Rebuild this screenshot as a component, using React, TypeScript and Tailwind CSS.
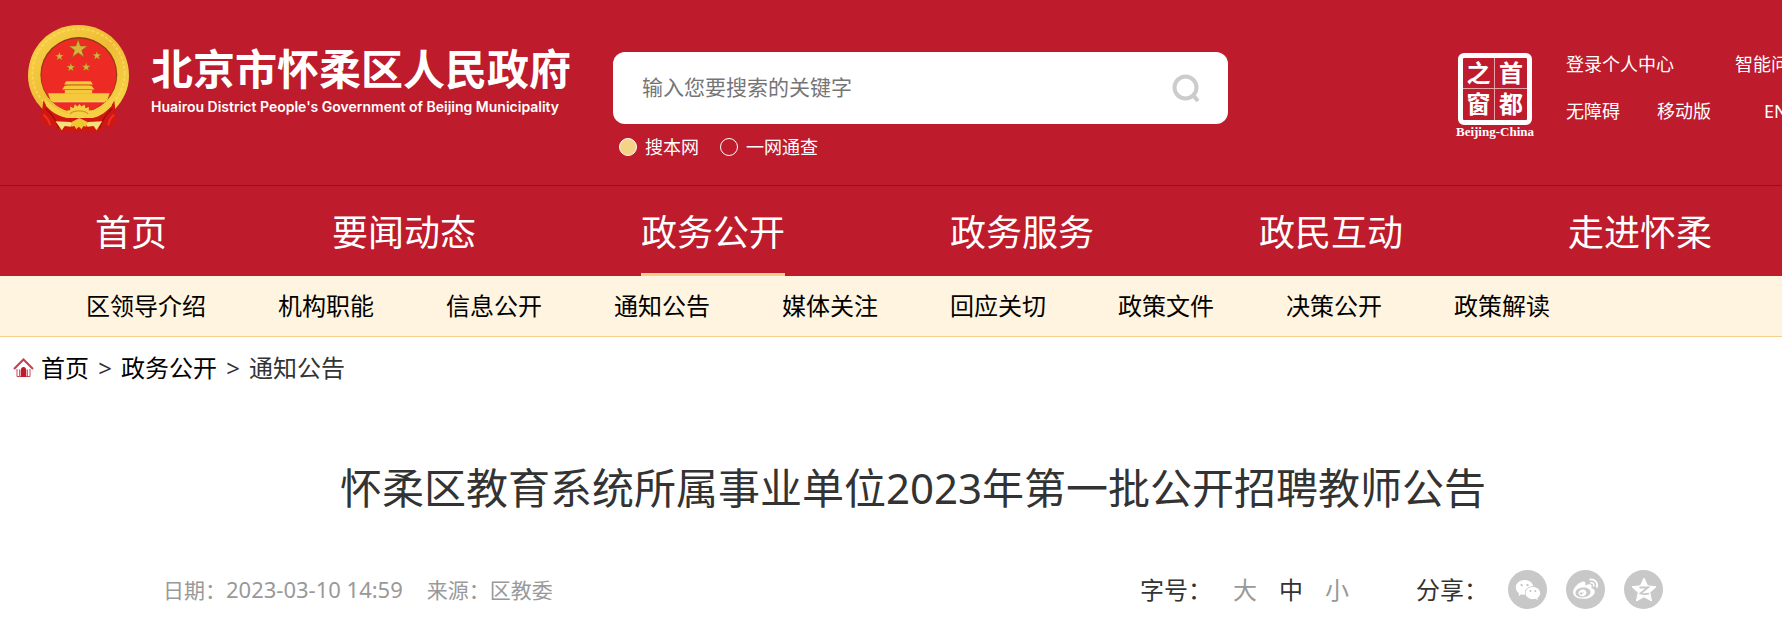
import React, { useState } from 'react';
import { AiFillWechat } from 'react-icons/ai';
import { FaWeibo } from 'react-icons/fa';

const mainNav = ['首页', '要闻动态', '政务公开', '政务服务', '政民互动', '走进怀柔'];

const subNav = [
  '区领导介绍',
  '机构职能',
  '信息公开',
  '通知公告',
  '媒体关注',
  '回应关切',
  '政策文件',
  '决策公开',
  '政策解读',
];

const fontSizes = ['大', '中', '小'];

const STAR = 'M0-10 2.3-3.1 9.5-3.1 3.7 1.2 5.9 8.1 0 3.9-5.9 8.1-3.7 1.2-9.5-3.1-2.3-3.1Z';

const Emblem: React.FC = () => (
  <svg viewBox="24 30 302 320" className="h-[107px] w-[101px] shrink-0" aria-hidden="true">
    <defs>
      <linearGradient id="gold" x1="0" y1="0" x2="1" y2="1">
        <stop offset="0" stopColor="#f9d548" />
        <stop offset="0.5" stopColor="#efbb35" />
        <stop offset="1" stopColor="#f8d84a" />
      </linearGradient>
    </defs>
    {/* wreath */}
    <path d="M175 30C262 30 326 98 326 182C326 222 308 256 284 282L240 312H112L68 282C42 256 24 222 24 182C24 98 88 30 175 30Z" fill="url(#gold)" />
    <ellipse cx="175" cy="174" rx="138" ry="132" fill="none" stroke="#fbe06a" strokeWidth="5" strokeDasharray="9 6" opacity="0.7" />
    {/* ribbons */}
    <path d="M70 256C84 280 108 300 146 308H206C246 300 270 280 282 256L289 316 274 334 252 332 238 349H122L104 334 82 332 62 318Z" fill="#d01712" />
    <path d="M76 280C94 294 106 310 116 338M276 280C260 294 248 310 238 338" fill="none" stroke="#a30c0c" strokeWidth="4" />
    <path d="M70 298C80 306 88 316 90 330M282 298C272 306 266 316 264 330" fill="none" stroke="#ee3024" strokeWidth="6" />
    <ellipse cx="176" cy="179" rx="115" ry="113" fill="#8f3a12" />
    <ellipse cx="176" cy="181" rx="112" ry="111" fill="#ee2a24" />
    <g fill="#d9b43a" stroke="#8c6a1c" strokeWidth="0.6">
      <path d={STAR} transform="translate(174 102) scale(2.9)" />
      <path d={STAR} transform="translate(118 124) scale(1.35)" />
      <path d={STAR} transform="translate(230 122) scale(1.35)" />
      <path d={STAR} transform="translate(152 157) scale(1.35)" />
      <path d={STAR} transform="translate(198 156) scale(1.35)" />
    </g>
    {/* gate tower */}
    <g fill="#f6c83c">
      <path d="M138 198H212L218 208H132Z" />
      <path d="M140 208H210V213H140Z" fill="#c98a1c" />
      <path d="M134 212H214L223 223H126Z" />
      <path d="M134 223H216V235H134Z" />
      <path d="M84 234H268L260 258H92Z" />
    </g>
    <path d="M97 258H255V261H97Z" fill="#fdf0b8" />
    <path d="M134 223H216" stroke="#b3761a" strokeWidth="2" />
    {/* cog and grain at the foot */}
    <path d="M72 246C96 274 128 293 146 296L142 284 150 286 150 274 160 279 164 267 172 274 178 266 184 274 193 268 196 279 206 275 206 286 214 284 210 296C230 292 256 274 280 246L274 272C250 298 226 310 206 308L190 302H164L146 308C124 306 100 296 78 272Z" fill="#f6cf45" />
    <path d="M150 296C160 284 192 284 204 296" fill="none" stroke="#d39b22" strokeWidth="4" />
    <path d="M106 318 150 320 158 324 152 334 134 332 125 345ZM246 318 204 320 196 324 202 334 220 332 229 345Z" fill="#f7e07a" />
    <path d="M154 320 166 314 178 308 190 314 202 320 198 334 190 332 184 342 176 334 168 342 163 332 154 334Z" fill="#efc531" />
  </svg>
);

const CapitalSeal: React.FC = () => (
  <a href="#capital" className="flex w-[82px] flex-col items-center text-white">
    <span className="grid h-[72px] w-[74px] grid-cols-2 grid-rows-2 rounded-md border-[5px] border-white text-2xl leading-[30px] font-bold">
      <span className="border-r border-b border-white/60 text-center">之</span>
      <span className="border-b border-white/60 text-center">首</span>
      <span className="border-r border-white/60 text-center">窗</span>
      <span className="text-center">都</span>
    </span>
    <span className="font-['Liberation_Serif',serif] text-[13px] leading-[14px] font-bold whitespace-nowrap">Beijing-China</span>
  </a>
);

const HomeIcon: React.FC = () => (
  <svg viewBox="0 0 21 20" className="h-5 w-[21px]" aria-hidden="true">
    <path d="M1 11 10.500 1.500 20 11" fill="none" stroke="#be1b2c" strokeWidth="2" opacity="0.85" />
    <path d="M4 11V18.500H17V11" fill="none" stroke="#be1b2c" strokeWidth="1" opacity="0.8" />
    <path d="M6 18V11.500H7.500V18ZM13.500 18V11.500H15V18Z" fill="#be1b2c" opacity="0.7" />
    <path d="M8 19V11.500Q8 9 10.500 9Q13 9 13 11.500V19Z" fill="#be1b2c" />
  </svg>
);

const QzoneIcon: React.FC = () => (
  <svg viewBox="0 0 28 28" className="size-7" aria-hidden="true">
    <path d="M14 2 17.600 9.800 26 10.700 19.800 16.500 21.600 25 14 20.800 6.400 25 8.200 16.500 2 10.700 10.400 9.800Z" fill="#fff" stroke="#fff" strokeLinejoin="round" />
    <path d="M9.500 11.500H18L10.500 17.500C13 18.300 16 18.300 19 17.700" fill="none" stroke="#c8c8c8" strokeWidth="1.800" />
  </svg>
);

const shareLinks = [
  { label: '微信', icon: <AiFillWechat size={28} /> },
  { label: '微博', icon: <FaWeibo size={25} /> },
  { label: 'QQ空间', icon: <QzoneIcon /> },
];

export default function App() {
  const [scope, setScope] = useState('site');
  const [size, setSize] = useState('中');

  return (
    <div className="overflow-hidden bg-white font-['Noto_Sans','Noto_Sans_CJK_SC',sans-serif]">
      <div className="min-w-[1826px]">
        <header className="bg-[#be1b2c] text-white">
          <div className="flex h-[186px] items-start border-b border-[#8e1322] pl-7">
            <a href="#home" className="flex w-[585px] gap-[22px] pt-[25px]">
              <Emblem />
              <span className="pt-[18px]">
                <span className="block text-[42px] leading-[52px] font-bold">北京市怀柔区人民政府</span>
                <span className="block pt-0.5 font-[Inter,sans-serif] text-sm leading-5 font-semibold whitespace-nowrap">
                  Huairou District People's Government of Beijing Municipality
                </span>
              </span>
            </a>

            <form className="w-[615px] pt-[52px]" onSubmit={(e) => e.preventDefault()}>
              <div className="flex h-[72px] items-center rounded-xl bg-white pr-7 pl-[29px]">
                <input
                  type="text"
                  aria-label="搜索"
                  placeholder="输入您要搜索的关键字"
                  className="min-w-0 flex-1 text-[21px] text-[#333] outline-none placeholder:text-[#757575]"
                />
                <button type="submit" aria-label="搜索">
                  <svg viewBox="0 0 28 28" className="size-7" fill="none" stroke="#ccc" strokeWidth="4">
                    <circle cx="13.500" cy="13.500" r="11" />
                    <path d="M20.500 20.500 26 27" />
                  </svg>
                </button>
              </div>
              <div className="flex gap-[21px] pt-2.5 pl-1.5 text-lg leading-[26px]">
                <label className="flex items-center gap-2">
                  <input
                    type="radio"
                    name="scope"
                    checked={scope === 'site'}
                    onChange={() => setScope('site')}
                    className="size-[18px] appearance-none rounded-full border border-white checked:bg-[#f5d386]"
                  />
                  搜本网
                </label>
                <label className="flex items-center gap-2">
                  <input
                    type="radio"
                    name="scope"
                    checked={scope === 'all'}
                    onChange={() => setScope('all')}
                    className="size-[18px] appearance-none rounded-full border border-white checked:bg-[#f5d386]"
                  />
                  一网通查
                </label>
              </div>
            </form>

            <div className="ml-auto flex gap-[30px] pt-[53px]">
              <CapitalSeal />
              <div className="w-[260px] text-lg leading-[22px] whitespace-nowrap">
                <div className="flex gap-[61px]">
                  <a href="#login">登录个人中心</a>
                  <a href="#ask">智能问答</a>
                </div>
                <div className="flex pt-[25px]">
                  <a href="#accessible" className="mr-[37px]">无障碍</a>
                  <a href="#mobile" className="mr-[53px]">移动版</a>
                  <a href="#en">EN</a>
                </div>
              </div>
            </div>
          </div>

          <nav className="flex h-[90px] gap-[165px] pl-[95px] text-[36px] leading-[94px] whitespace-nowrap">
            {mainNav.map((item) => (
              <a key={item} href="#nav" className={item === '政务公开' ? 'h-[90px] border-b-3 border-[#f5d08a]' : 'h-[90px]'}>
                {item}
              </a>
            ))}
          </nav>
        </header>

        <nav className="flex h-[61px] gap-[72px] border-b border-[#f5d08a] bg-[#fef4df] pl-[86px] text-2xl leading-[60px] whitespace-nowrap text-black">
          {subNav.map((item) => (
            <a key={item} href="#sub">{item}</a>
          ))}
        </nav>

        <div className="flex h-[62px] items-center pl-[13px] text-2xl text-[#333]">
          <HomeIcon />
          <a href="#home" className="ml-[7px] text-black">首页</a>
          <span className="w-8 text-center">&gt;</span>
          <a href="#open" className="text-black">政务公开</a>
          <span className="w-8 text-center">&gt;</span>
          <span>通知公告</span>
        </div>

        <main className="mx-auto w-[1500px]">
          <h1 className="pt-[59px] text-center text-[42px] leading-[60px] text-[#333]">
            怀柔区教育系统所属事业单位2023年第一批公开招聘教师公告
          </h1>
          <div className="flex items-center pt-[52px] pb-4 text-2xl text-[#333]">
            <p className="flex items-baseline gap-6 text-[21px] leading-8 text-[#999]">
              <span>日期：<time className="text-[22px]">2023-03-10 14:59</time></span>
              <span>来源：区教委</span>
            </p>
            <div className="ml-auto flex items-center">
              <span>字号：</span>
              <div className="ml-[21px] flex gap-[22px]">
                {fontSizes.map((s) => (
                  <button key={s} type="button" onClick={() => setSize(s)} className={s === size ? 'text-[#333]' : 'text-[#999]'}>
                    {s}
                  </button>
                ))}
              </div>
            </div>
            <div className="ml-[67px] flex items-center">
              <span>分享：</span>
              <div className="ml-5 flex gap-[19px]">
                {shareLinks.map((s) => (
                  <a key={s.label} href="#share" aria-label={s.label} className="flex size-[39px] items-center justify-center rounded-full bg-[#c8c8c8] text-white">
                    {s.icon}
                  </a>
                ))}
              </div>
            </div>
          </div>
        </main>
      </div>
    </div>
  );
}
